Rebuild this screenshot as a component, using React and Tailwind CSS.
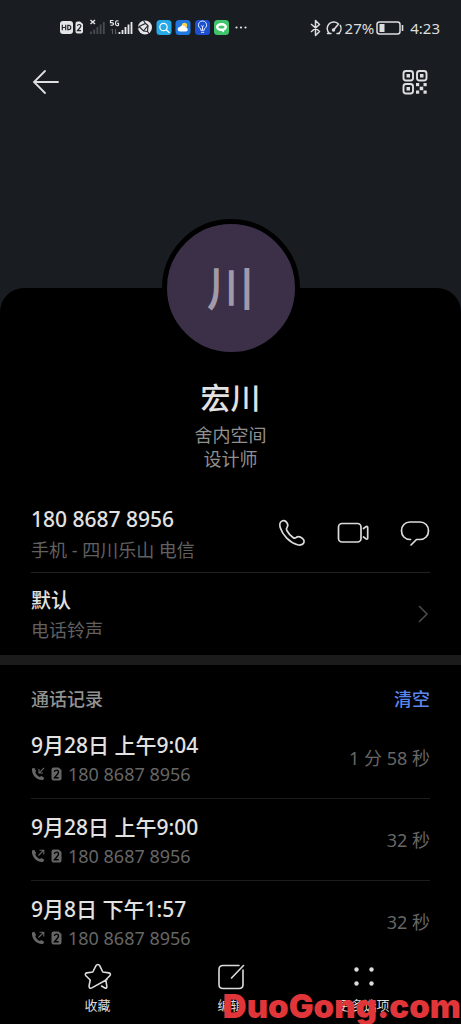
import React from "react";

const PHONE_NUMBER = "180 8687 8956";

const calls = [
  { id: 1, when: "9月28日 上午9:04", length: "1 分 58 秒", incoming: true },
  { id: 2, when: "9月28日 上午9:00", length: "32 秒", incoming: false },
  { id: 3, when: "9月8日 下午1:57", length: "32 秒", incoming: false },
];

function StatusIcons() {
  return (
    <svg width="190" height="20" viewBox="0 0 190 20" className="shrink-0" aria-hidden="true">
      <rect x="1" y="3" width="13" height="13" rx="3" fill="#e4e5e6" />
      <path d="M3.3 6.8v5.4M6.7 6.8v5.4M3.3 9.5h3.4M8.8 7.4v4.2h.8q2.2 0 2.2-2.1T9.600 7.400z" fill="none" stroke="#22252a" strokeWidth="1.2" />
      <path d="M16.500 5.500q0-2 2-2h2.500l3 2.500v7.500q0 2-2 2h-3.500q-2 0-2-2z" fill="#e4e5e6" />
      <path d="M18.400 7.800q.2-1.300 1.800-1.300t1.700 1.300q0 1-1.200 2.200l-2.200 2.600h3.600" fill="none" stroke="#22252a" strokeWidth="1.200" />
      <path d="M31.500 2l4.500 4M36 2l-4.500 4" stroke="#e4e5e6" strokeWidth="1.400" />
      <path d="M32 16v-2.500M35.200 16v-4.500M38.400 16v-7M41.600 16v-9.500M44.800 16v-12" stroke="#494c50" strokeWidth="1.800" />
      <path d="M54.500 2.500h-3v2.200q3-.4 3 1.300 0 1.500-3 1.200M59.500 3q-3-1-3 2.200t3 2.200V5.300h-1.300" fill="none" stroke="#e4e5e6" strokeWidth="1.200" />
      <path d="M53.500 16v-5l-1.500 1.500M56.500 11v5l1.500-1.500" fill="none" stroke="#5a5d61" strokeWidth="1" />
      <path d="M60.500 16v-2M63.500 16v-4M66.500 16v-7M69.500 16v-9.500M72.500 16v-12" stroke="#e8e9ea" strokeWidth="1.800" />
      <circle cx="86" cy="9.500" r="7" fill="#e6e7e8" />
      <path d="M80 8.500l6.500-3 2.500 2-.5 6M80 8.500l4.500 4.500 4 .5M86.500 5.500l-2-3M80 8.500l-2 3M88.500 13.500l1.500 2M84.500 13l4-5" stroke="#25282d" strokeWidth="1.200" fill="none" />
      <rect x="97.500" y="2" width="15" height="15" rx="3.500" fill="#27a9e8" />
      <circle cx="104.500" cy="9" r="3.700" fill="none" stroke="#fff" strokeWidth="1.200" />
      <path d="M107.500 12l2.500 2.500" stroke="#fff" strokeWidth="1.300" strokeLinecap="round" />
      <rect x="116.500" y="2" width="15" height="15" rx="3.500" fill="#1f79e0" />
      <circle cx="125.500" cy="7.500" r="2.700" fill="#ffd24a" />
      <path d="M121 13.500a2.300 2.300 0 010-4.600 3 3 0 015.400.600 2 2 0 01.7 4z" fill="#fff" />
      <rect x="136" y="2" width="15" height="15" rx="3.500" fill="#1d50cf" />
      <path d="M141.800 12.300v-1.500a4.100 4.100 0 113.400 0v1.500zM142 14.300h3.200M143.500 12V8.500M142 7.500l1.500 1 1.500-1" fill="none" stroke="#dfe7ff" strokeWidth="1" />
      <rect x="155" y="2" width="15" height="15" rx="3.500" fill="#3fc56c" />
      <path d="M162.500 5c-3.300 0-5.500 1.800-5.500 4s2.200 4 5.500 4l2.500 1.500.2-2c1.700-.7 2.800-2 2.800-3.500 0-2.200-2.200-4-5.500-4z" fill="#fff" />
      <ellipse cx="162.500" cy="9" rx="3" ry="1.600" fill="#3fc56c" />
      <circle cx="177.500" cy="9.500" r="1.100" fill="#e4e5e6" />
      <circle cx="182" cy="9.500" r="1.100" fill="#e4e5e6" />
      <circle cx="186.500" cy="9.500" r="1.100" fill="#e4e5e6" />
    </svg>
  );
}

function StatusBar() {
  return (
    <div className="flex h-14 items-center justify-between pl-[59px] pr-[21px] text-[#dcdddf]">
      <StatusIcons />
      <div className="flex items-center text-[15px] leading-5">
        <svg width="34" height="18" viewBox="0 0 34 18" className="mr-0.5" fill="none" stroke="currentColor" strokeWidth="1.500" aria-hidden="true">
          <path d="M2 5l8.500 7.500-4 4V1.500l4 4L2 13" strokeLinejoin="round" />
          <path d="M20.500 14.500a6.500 6.500 0 118.500-10M31.300 6.300a6.500 6.500 0 01-1.800 8.200M18.500 14.500h3.500M28 14.500h2.500M24.500 11l5-6" strokeLinecap="round" />
          <circle cx="24.500" cy="11" r="1" />
        </svg>
        <span>27%</span>
        <svg width="28" height="16" viewBox="0 0 28 16" className="ml-0.5 mr-1.5" fill="none" aria-hidden="true">
          <rect x="1" y="2" width="23" height="12" rx="2.500" stroke="currentColor" strokeWidth="1.500" />
          <rect x="3.500" y="4" width="5" height="8" fill="currentColor" />
          <path d="M26.500 5v6" stroke="currentColor" strokeWidth="1.600" />
        </svg>
        <span>4:23</span>
      </div>
    </div>
  );
}

function AppBar() {
  return (
    <header className="flex h-[52px] items-center justify-between px-8 text-[#dedfe0]">
      <button type="button" aria-label="返回">
        <svg width="28" height="26" viewBox="0 0 28 26" fill="none" stroke="currentColor" strokeWidth="1.800" strokeLinecap="round">
          <path d="M26 13H2.500M13 2L2 13l11 11" />
        </svg>
      </button>
      <button type="button" aria-label="二维码">
        <svg width="28" height="28" viewBox="0 0 28 28" fill="none" stroke="currentColor" strokeWidth="1.900">
          <rect x="2.500" y="3" width="9.500" height="9.500" rx="2.500" />
          <rect x="16" y="3" width="9.500" height="9.500" rx="2.500" />
          <rect x="2.500" y="16" width="9.500" height="9.500" rx="2.500" />
          <g fill="currentColor" stroke="none">
            <rect x="5.500" y="6" width="3.500" height="3.500" />
            <rect x="19" y="6" width="3.500" height="3.500" />
            <rect x="5.500" y="19" width="3.500" height="3.500" />
            <rect x="15" y="15" width="3.200" height="3.200" />
            <rect x="22.500" y="15" width="3.200" height="3.200" />
            <rect x="18.700" y="18.700" width="3.500" height="3.500" />
            <rect x="15" y="22.500" width="3.200" height="3.200" />
            <rect x="22.500" y="22.500" width="3.200" height="3.200" />
          </g>
        </svg>
      </button>
    </header>
  );
}

function CallIcon({ incoming }) {
  return (
    <svg width="14" height="14" viewBox="0 0 14 14" fill="none" aria-label={incoming ? "来电" : "去电"}>
      <path d="M1 1.500C.3 7.500 5.500 13.500 12 13l1.300-2-2.800-2-1.800 1C7 9.300 5 7.300 4.300 5.500L5 3.800 3.200.8z" fill="currentColor" />
      {incoming ? (
        <path d="M13 1L8.200 5.800M8 2v4h4" stroke="currentColor" strokeWidth="1.100" />
      ) : (
        <path d="M7.500 6.500l5-5M8.500 1.200h4.300v4.300" stroke="currentColor" strokeWidth="1.100" />
      )}
    </svg>
  );
}

function SimIcon() {
  return (
    <svg width="11" height="14" viewBox="0 0 11 14" aria-label="卡2">
      <path d="M0.500 2.500q0-2 2-2H7.500l3 2.500v8.500q0 2-2 2h-6q-2 0-2-2z" fill="currentColor" />
      <path d="M3.400 5q.2-1.900 2.100-1.900T7.500 4.900q0 1.200-1.300 2.600L3.500 10.700h4.200" fill="none" stroke="#000" strokeWidth="1.400" />
    </svg>
  );
}

function CallRow({ call }) {
  return (
    <li className="flex items-center justify-between border-b border-[#1c1c1c] pb-3 pt-[13px] last:border-transparent">
      <div>
        <p className="text-[21px] font-medium leading-[30px] text-[#e2e2e2]">{call.when}</p>
        <p className="mt-0.5 flex items-center text-lg leading-6 text-[#666]">
          <CallIcon incoming={call.incoming} />
          <span className="mx-1.5">
            <SimIcon />
          </span>
          {PHONE_NUMBER}
        </p>
      </div>
      <span className="text-lg leading-6 text-[#666]">{call.length}</span>
    </li>
  );
}

function NavButton({ label, children }) {
  return (
    <button type="button" className="flex flex-col items-center text-[13px] leading-5 text-[#dcdcdc]">
      <svg width="28" height="28" viewBox="0 0 28 28" fill="none" stroke="currentColor" strokeWidth="1.600" strokeLinecap="round" strokeLinejoin="round" className="mb-1" aria-hidden="true">
        {children}
      </svg>
      {label}
    </button>
  );
}

export default function App() {
  return (
    <div className="relative flex min-h-screen flex-col overflow-hidden bg-[#191d22] font-['Noto_Sans','Noto_Sans_CJK_SC',sans-serif]">
      <StatusBar />
      <AppBar />
      <main className="mt-[180px] grow rounded-t-3xl bg-black">
        <section className="flex flex-col items-center">
          <div className="-mt-[69px] flex size-[138px] items-center justify-center rounded-full border-[5px] border-black bg-[#3b3048] text-5xl font-medium text-[#a29aaa]">
            川
          </div>
          <h1 className="mt-[21px] text-3xl font-medium leading-10 text-[#e2e2e2]">宏川</h1>
          <p className="mt-[5px] text-lg leading-6 text-[#909090]">舍内空间</p>
          <p className="text-lg leading-6 text-[#909090]">设计师</p>
        </section>

        <section className="mt-[33px] px-[31px]">
          <div className="flex items-center justify-between border-b border-[#222] pb-2.5">
            <div>
              <p className="text-[21px] font-medium leading-[30px] text-[#e2e2e2]">{PHONE_NUMBER}</p>
              <p className="mt-1 text-lg leading-6 text-[#606060]">手机 - 四川乐山 电信</p>
            </div>
            <div className="flex items-center gap-[31px] text-[#dcdcdc]">
              <button type="button" aria-label="拨打电话">
                <svg width="28" height="28" viewBox="0 0 28 28" fill="none" stroke="currentColor" strokeWidth="1.700" strokeLinejoin="round">
                  <path d="M4.500 1.700C2 2.500 1.300 5.500 2.200 8.500 4.500 16 11.500 23.500 19.500 25.800c3 .8 6-.3 6.500-2.600.5-1.800-.3-2.900-1.500-3.900-2.500-2-4.800-2.200-6.500-.7-1 .9-1.800.8-3-.1-2.500-1.900-4.800-4.500-6.200-7-.6-1.100-.5-2 .2-2.900C10.200 6.900 9.700 4.500 8 2.700 7 1.600 5.800 1.300 4.500 1.700z" />
                </svg>
              </button>
              <button type="button" aria-label="视频通话">
                <svg width="32" height="28" viewBox="0 0 32 28" fill="none" stroke="currentColor" strokeWidth="1.700" strokeLinecap="round" strokeLinejoin="round">
                  <rect x="1.500" y="4.500" width="22.500" height="18.500" rx="3.500" />
                  <path d="M26.500 9.500l2.200-1.700q2-1 2 .8v10.300q0 1.800-2 .8L26.500 18" />
                </svg>
              </button>
              <button type="button" aria-label="发送信息">
                <svg width="30" height="28" viewBox="0 0 30 28" fill="none" stroke="currentColor" strokeWidth="1.700" strokeLinecap="round" strokeLinejoin="round">
                  <path d="M10.500 20.500H10c-5 0-8.500-3.700-8.500-8.700S5 3 10 3h10c5 0 8.500 3.800 8.500 8.800s-3.500 8.700-8.500 8.700h-3.500l-5.500 5.500" />
                </svg>
              </button>
            </div>
          </div>
          <a href="#ringtone" className="flex items-center justify-between py-[13px]">
            <span>
              <span className="block text-xl font-medium leading-[30px] text-[#e2e2e2]">默认</span>
              <span className="mt-0.5 block text-lg leading-6 text-[#606060]">电话铃声</span>
            </span>
            <svg width="14" height="20" viewBox="0 0 14 20" fill="none" stroke="#4a4a4a" strokeWidth="1.600" strokeLinecap="round" aria-hidden="true">
              <path d="M3.500 2.500l7.500 7.500-7.500 7.500" />
            </svg>
          </a>
        </section>

        <div className="h-2.5 bg-[#1b1b1b]" />

        <section className="px-[31px] pt-[22px]">
          <div className="mb-1.5 flex items-center justify-between text-lg leading-6">
            <h2 className="font-medium text-[#929292]">通话记录</h2>
            <button type="button" className="font-medium text-[#5b86ee]">清空</button>
          </div>
          <ul>
            {calls.map((call) => (
              <CallRow key={call.id} call={call} />
            ))}
          </ul>
        </section>

        <nav className="grid grid-cols-3 px-[31px]">
          <NavButton label="收藏">
            <path d="M23 16.500L7.800 24.900c-1.800.9-3-.2-2.700-2L6.200 17 1.900 12.700c-1.100-1.200-.6-2.500 1-2.800l5.900-.9 3.200-6.300c.9-1.700 2.900-1.700 3.700 0l3.100 6.300 6 .9c1.600.3 2.200 1.600 1 2.800l-4 4.100 1 6.400c.3 2-.7 2.400-2.300 1.500L17.500 23" />
          </NavButton>
          <NavButton label="编辑">
            <path d="M22 2.500H6Q2 2.500 2 6.500v15q0 4 4 4h16q4 0 4-4V7M14.500 15L26.500 2.500" />
          </NavButton>
          <NavButton label="更多选项">
            <g fill="currentColor" stroke="none">
              <circle cx="6.500" cy="6.500" r="2.200" />
              <circle cx="21.500" cy="6.500" r="2.200" />
              <circle cx="6.500" cy="20.500" r="2.200" />
              <circle cx="21.500" cy="20.500" r="2.200" />
            </g>
          </NavButton>
        </nav>
      </main>
      <p className="pointer-events-none absolute bottom-0 right-0 whitespace-nowrap font-['Inter',sans-serif] text-[33px] font-black leading-9 text-[#e0363a]">
        DuoGong.com
      </p>
    </div>
  );
}
